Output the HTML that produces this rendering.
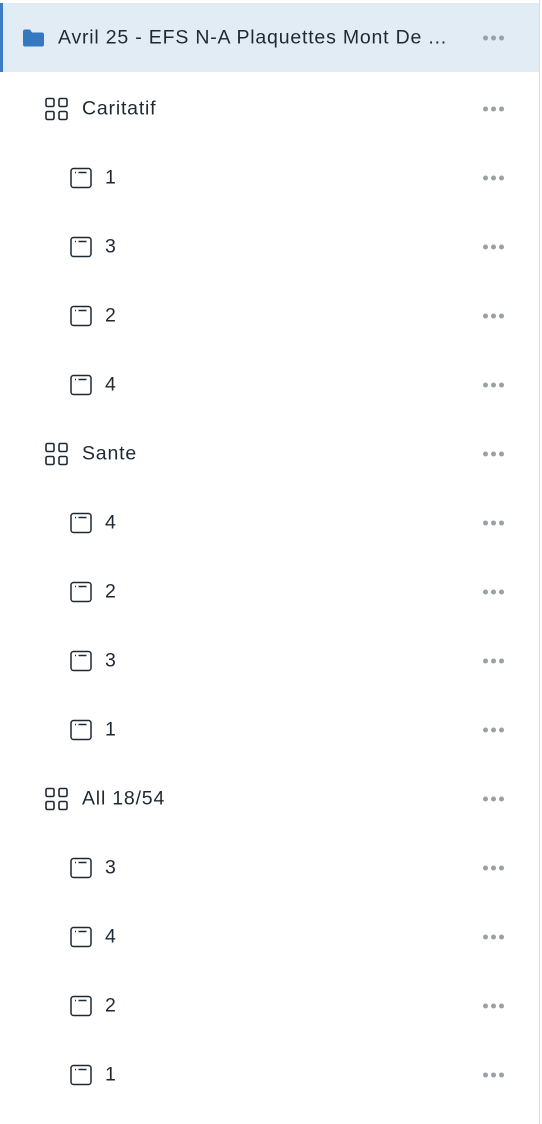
<!DOCTYPE html>
<html><head><style>
body{margin:0;width:542px;height:1124px;background:#fff;font-family:"Liberation Sans",sans-serif;color:#1f2933;position:relative;overflow:hidden}
.r{position:absolute;left:0;width:539px;height:69px}
.hd{top:3px;background:#e2ecf5;border-left:3px solid #3b7cc4;box-sizing:border-box}
.t{position:absolute;top:50%;transform:translateY(-50%);font-size:19.5px;letter-spacing:0.8px;white-space:nowrap}
.ic{position:absolute;top:50%;transform:translateY(-50%)}
.dots{position:absolute;right:35px;top:50%;transform:translateY(-50%);display:flex;gap:3px}
.dots i{width:5px;height:5px;border-radius:50%;background:#9aa0a6;display:block}
.vb{position:absolute;left:539px;top:0;width:1px;height:1124px;background:#dcdcdc}
</style></head><body>
<div class="vb"></div>
<div class="r hd"><svg class="ic" style="left:19px" width="23" height="19" viewBox="0 0 23 19"><path d="M1 3a2 2 0 0 1 2-2h5l2 3h10a2 2 0 0 1 2 2v10a2 2 0 0 1-2 2H3a2 2 0 0 1-2-2z" fill="#3479c0"/></svg><span class="t" style="left:55px">Avril 25 - EFS N-A Plaquettes Mont De ...</span><div class="dots"><i></i><i></i><i></i></div></div>
<div id="list"></div>
<script>
var rows=[["g","Caritatif"],["p","1"],["p","3"],["p","2"],["p","4"],["g","Sante"],["p","4"],["p","2"],["p","3"],["p","1"],["g","All 18/54"],["p","3"],["p","4"],["p","2"],["p","1"]];
var h="";
rows.forEach(function(r,i){
var c=108+i*69;
var top=c-34;
var icon,tx;
if(r[0]=="g"){icon='<svg class="ic" style="left:45px" width="23" height="23" viewBox="0 0 23 23" fill="none" stroke="#1f2933" stroke-width="1.6"><rect x="1" y="1" width="8" height="8" rx="1.5"/><rect x="14" y="1" width="8" height="8" rx="1.5"/><rect x="1" y="14" width="8" height="8" rx="1.5"/><rect x="14" y="14" width="8" height="8" rx="1.5"/></svg>';tx=82;}
else{icon='<svg class="ic" style="left:70px" width="22" height="21" viewBox="0 0 22 21" fill="none" stroke="#1f2933" stroke-width="1.5"><rect x="1" y="1" width="20" height="19" rx="2.5"/><path d="M5 5h1M8.5 5h8"/></svg>';tx=105;}
h+='<div class="r" style="top:'+top+'px">'+icon+'<span class="t" style="left:'+tx+'px">'+r[1]+'</span><div class="dots"><i></i><i></i><i></i></div></div>';
});
document.getElementById("list").innerHTML=h;
</script>
</body></html>
